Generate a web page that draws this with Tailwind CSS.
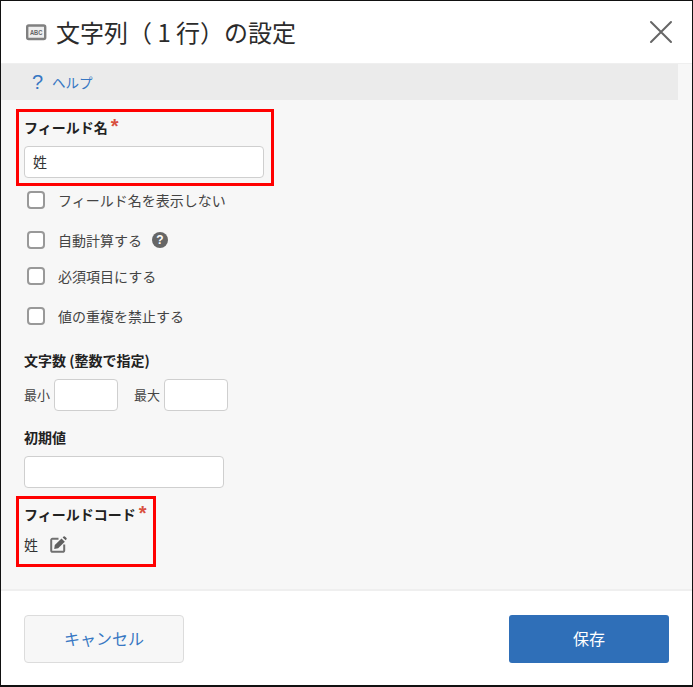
<!DOCTYPE html>
<html lang="ja">
<head>
  <meta charset="UTF-8">
  <title>文字列(1行)の設定</title>
  <script src="https://cdn.jsdelivr.net/npm/@tailwindcss/browser@4"></script>
</head>
<body class="bg-white">
  <div class="w-[693px] h-[687px] border border-[#111] border-b-2 flex flex-col overflow-hidden bg-white text-[#333] font-['Noto_Sans_CJK_JP','Liberation_Sans',sans-serif]">
    <!-- header -->
    <header class="h-[62px] shrink-0 flex items-center pl-[25px] pr-[19px]">
      <svg class="w-[21px] h-[17px] mr-[9px]" viewBox="0 0 21 17">
        <rect x="1.2" y="1.5" width="18" height="13.5" rx="1.5" fill="#eee" stroke="#808080" stroke-width="2.4"/>
        <text x="10.2" y="11.2" text-anchor="middle" font-size="8" font-weight="700" fill="#666" textLength="12.5" lengthAdjust="spacingAndGlyphs" font-family="Liberation Sans">ABC</text>
      </svg>
      <h1 class="text-[24px] leading-none text-[#2b2b2b]">文字列（ 1 行）の設定</h1>
      <svg class="ml-auto w-[24px] h-[24px]" viewBox="0 0 24 24" fill="none" stroke="#666" stroke-width="2" stroke-linecap="round">
        <path d="M2 2 L22 22 M22 2 L2 22"/>
      </svg>
    </header>

    <main class="flex-1 bg-[#f7f7f7] border-t border-[#efefef]">
      <div class="h-[36px] w-[677px] bg-[#ebebeb] flex items-center pl-[31px] text-[#3777c3] text-[13.5px]">
        <span class="text-[20px] leading-none w-[15px] font-['Liberation_Sans',sans-serif]">?</span>
        <span class="ml-[5px]">ヘルプ</span>
      </div>

      <div class="px-[15px] pt-[9px]">
        <div class="w-[258px] h-[77px] border-[3px] border-[#ff0000] pl-[5px] pt-[5px]">
          <div class="flex text-[14px] font-bold leading-[20px] text-[#222]">フィールド名<span class="ml-[3px] text-[#d9503f] text-[20px] leading-[18px] font-bold font-['Liberation_Sans',sans-serif]">*</span></div>
          <div class="mt-[9px] w-[240px] h-[32px] bg-white border border-[#cfcfcf] rounded-[4px] flex items-center pl-[8px] pb-[2px] text-[14px]">姓</div>
        </div>

        <div class="pl-[11px] mt-[4px] text-[14px] text-[#444]">
          <label class="h-[20px] flex items-center gap-[13px]">
            <span class="w-[18px] h-[18px] bg-white border-2 border-[#999] rounded-[4px]"></span>フィールド名を表示しない
          </label>
          <label class="h-[20px] mt-[20px] flex items-center gap-[13px]">
            <span class="w-[18px] h-[18px] bg-white border-2 border-[#999] rounded-[4px]"></span>自動計算する
            <span class="-ml-[3px] w-[16px] h-[16px] rounded-full bg-[#666] text-white text-[12px] font-bold flex items-center justify-center font-['Liberation_Sans',sans-serif]">?</span>
          </label>
          <label class="h-[20px] mt-[16px] flex items-center gap-[13px]">
            <span class="w-[18px] h-[18px] bg-white border-2 border-[#999] rounded-[4px]"></span>必須項目にする
          </label>
          <label class="h-[20px] mt-[20px] flex items-center gap-[13px]">
            <span class="w-[18px] h-[18px] bg-white border-2 border-[#999] rounded-[4px]"></span>値の重複を禁止する
          </label>
        </div>

        <div class="pl-[8px] mt-[24px]">
          <div class="text-[14px] font-bold leading-[20px] text-[#222]">文字数 (整数で指定)</div>
          <div class="mt-[9px] flex items-center text-[13px] text-[#444]">
            <span class="w-[30px]">最小</span>
            <span class="w-[64px] h-[32px] bg-white border border-[#cfcfcf] rounded-[4px]"></span>
            <span class="ml-[16px] w-[30px]">最大</span>
            <span class="w-[64px] h-[32px] bg-white border border-[#cfcfcf] rounded-[4px]"></span>
          </div>
          <div class="mt-[16px] text-[14px] font-bold leading-[20px] text-[#222]">初期値</div>
          <div class="mt-[9px] w-[200px] h-[32px] bg-white border border-[#cfcfcf] rounded-[4px]"></div>
        </div>

        <div class="mt-[8px] w-[140px] h-[71px] border-[3px] border-[#ff0000] pl-[5px] pt-[5px]">
          <div class="flex text-[14px] font-bold leading-[20px] text-[#222]">フィールドコード<span class="ml-[3px] text-[#d9503f] text-[20px] leading-[18px] font-bold font-['Liberation_Sans',sans-serif]">*</span></div>
          <div class="mt-[10px] flex items-center text-[14px] leading-[20px]">姓
            <svg class="ml-[12px] w-[17px] h-[17px]" viewBox="0 0 17 17" fill="none">
              <path d="M8.5 2.8 H2.5 A1.2 1.2 0 0 0 1.2 4 V14.6 A1.2 1.2 0 0 0 2.5 15.8 H12.8 A1.2 1.2 0 0 0 14.2 14.6 V8.5" stroke="#707070" stroke-width="2"/>
              <path d="M4.2 13 L4.8 9 L11.5 2.4 L14.8 5.7 L8.2 12.3 Z" fill="#606060"/>
              <path d="M12.6 1.4 L13.6 .5 Q14.2 0 14.9 .5 L16.5 2.1 Q17 2.7 16.5 3.3 L15.7 4.3 Z" fill="#606060"/>
            </svg>
          </div>
        </div>
      </div>
    </main>

    <footer class="h-[96px] shrink-0 border-t-2 border-[#efefef] flex items-start justify-between px-[23px] pt-[24px] text-[16px]">
      <button class="w-[160px] h-[48px] pb-[2px] bg-[#f7f7f7] border border-[#dcdcdc] rounded-[4px] text-[#3777c3]">キャンセル</button>
      <button class="w-[160px] h-[48px] pb-[2px] bg-[#2f6fb8] rounded-[3px] text-white">保存</button>
    </footer>
  </div>
</body>
</html>
